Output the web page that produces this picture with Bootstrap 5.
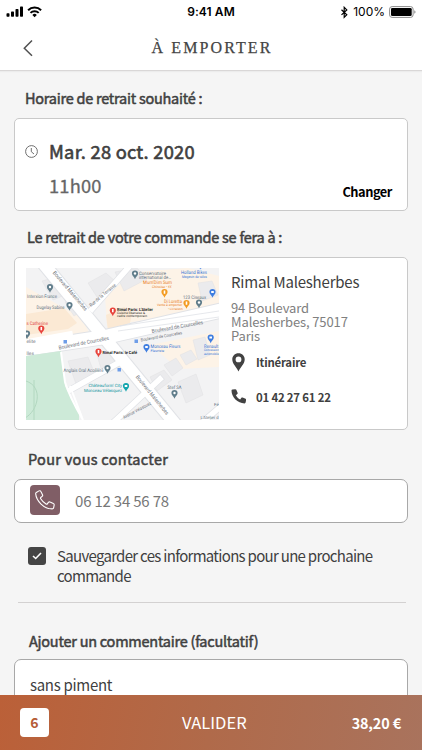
<!DOCTYPE html>
<html lang="fr">
<head>
<meta charset="utf-8">
<meta name="viewport" content="width=device-width, initial-scale=1">
<title>À emporter</title>
<link href="https://cdn.jsdelivr.net/npm/bootstrap@5.3.0/dist/css/bootstrap.min.css" rel="stylesheet">
<style>
body{height:750px;overflow:hidden;background:#f5f5f5;color:#404040;font-family:"Noto Sans CJK JP","Noto Sans CJK SC",sans-serif;font-size:15px;line-height:20px}
.app-screen{height:750px;overflow:hidden}
.app-head{height:71px;border-bottom:1px solid #d9d7d7;box-shadow:0 1px 1px #ececec;flex:none}
.status{height:24px;font-family:Inter,"Liberation Sans",sans-serif;font-size:12px;color:#000;padding:0 6px}
.status > *{flex:1}
.clock-text{font-weight:600;letter-spacing:.1px}
.title-bar{height:48px;padding:0 20px}
.title-bar h1{font-family:"Liberation Serif",serif;font-size:16px;letter-spacing:2.1px;margin:0 -2px 0 0;color:#444;-webkit-text-stroke:.25px #444}
.side{width:16px}
.app-main{height:624px;overflow:hidden;padding:0 14px;flex:none}
.panel{border:1px solid #c9c9c9;border-radius:5px;background:#fff}
.lbl{font-weight:400;-webkit-text-stroke:.5px #404040;font-size:14.5px;line-height:20px;margin:0;white-space:nowrap}
.l1{margin:17px 0 0 11px;letter-spacing:-.25px}
.p1{height:93px;margin-top:10px;padding:20px 15px 0 11px}
.clock-icon{margin:6px 0 0 -1px}
.when{margin-left:11px}
.l2{margin:16px 0 0 13px;letter-spacing:-.25px}
.p2{height:173px;margin-top:10px;padding:10px 11px}
.l3{margin:19px 0 0 14px;letter-spacing:.3px}
.p3{height:44px;margin-top:10px;padding:0 15px;border-color:#a8a8a8;border-radius:7px}
.day{-webkit-text-stroke:.6px #404040;font-size:18.3px;letter-spacing:.25px;line-height:24px;color:#404040}
.hour{font-size:18.3px;letter-spacing:.2px;line-height:24px;color:#666;margin-top:10px;-webkit-text-stroke:.3px #666}
.change{font-size:12.8px;font-weight:700;color:#000;letter-spacing:-.45px;line-height:18px;margin-bottom:9px}
.shop{font-size:15px;letter-spacing:-.2px;line-height:20px;margin-top:4px;white-space:nowrap}
.addr{font-size:13px;letter-spacing:-.12px;line-height:14.2px;color:#808080;margin-top:9px}
.act{font-size:11.4px;font-weight:700;line-height:18px;gap:10px;letter-spacing:-.2px}
.act-map{margin-top:9px}
.phone-tile{width:30px;height:30px;border-radius:4px;background:#805e66;margin-bottom:2px}
.tel{font-size:15px;color:#777;letter-spacing:-.2px;margin-left:15px}
.tick{width:18px;height:18px;border-radius:3px;background:#454545;flex:none}
.save{margin:24px 0 0 14px;gap:11px;letter-spacing:-.7px}
.save-text{margin-top:-1px}
.rule{height:1px;background:#d3d1d1;margin:16px 2px 0 4px}
.l4{margin:28px 0 0 15px;letter-spacing:-.24px}
.p4{height:90px;margin-top:8px;padding:15px;border-color:#a8a8a8;border-radius:7px;letter-spacing:-.3px}
.app-foot{height:55px;background:linear-gradient(100deg,#bb6038,#b06a4a 50%,#a9735d);color:#fff;padding:0 21px 0 20px;flex:none}
.count{width:29px;height:29px;border-radius:4px;background:#fff;color:#b65c36;font-weight:700;font-size:14px;padding-bottom:1px}
.go{font-size:16.5px;margin:0 0 2px 28px}
.sum{font-size:14.4px;font-weight:700;letter-spacing:-.15px}
</style>
<script src="https://cdn.jsdelivr.net/npm/bootstrap@5.3.0/dist/js/bootstrap.bundle.min.js"></script>
</head>
<body>
<div class="app-screen d-flex flex-column">
<header class="app-head bg-white">
  <div class="status d-flex align-items-center">
    <div class="d-flex align-items-center">
      <svg width="37" height="14" viewBox="0 0 37 14"><g fill="#000"><rect x=".5" y="8.2" width="3" height="3.6" rx=".7"/><rect x="5" y="6.5" width="3" height="5.3" rx=".7"/><rect x="9.5" y="4" width="3" height="7.8" rx=".7"/><rect x="14" y="1.5" width="3" height="10.3" rx=".7"/></g><g fill="none" stroke="#000" stroke-width="2"><path d="M22.1 5.2a9.2 9.2 0 0 1 13 0M24.5 7.9a5.8 5.8 0 0 1 8.2 0"/></g><path d="M28.6 12.2l-2.2-2.3a3.2 3.2 0 0 1 4.4 0z"/></svg>
    </div>
    <div class="clock-text text-center">9:41 AM</div>
    <div class="d-flex align-items-center justify-content-end">
      <svg class="me-1" width="9" height="13" viewBox="0 0 9 13" fill="none" stroke="#000" stroke-width="1.2"><path d="M1.5 3.7l5.3 5-2.6 2.6V1.3l2.6 2.6-5.3 5"/></svg>
      <span>100%</span>
      <svg class="ms-1" width="27" height="12" viewBox="0 0 27 12"><rect x=".6" y=".6" width="23.5" height="10.8" rx="2.5" fill="none" stroke="#8b8b8b"/><rect x="2" y="2" width="20.7" height="8" rx="1.3"/><path d="M25.2 4.2q1.4.5 1.4 1.8t-1.4 1.8z" fill="#999"/></svg>
    </div>
  </div>
  <div class="title-bar d-flex align-items-center justify-content-between">
    <svg class="side" height="18" viewBox="0 0 16 18" fill="none" stroke="#505050" stroke-width="1.5"><path d="M12 1.5L4.3 9.2l7.7 7.6"/></svg>
    <h1>À EMPORTER</h1>
    <span class="side"></span>
  </div>
</header>
<main class="app-main">
  <h2 class="lbl l1">Horaire de retrait souhaité :</h2>
  <section class="panel p1 d-flex">
    <svg class="clock-icon flex-shrink-0" width="13" height="13" viewBox="0 0 13 13" fill="none" stroke="#606060" stroke-width=".9"><circle cx="6.500" cy="6.500" r="5.900"/><path d="M6.300 3v3.700L9 9"/></svg>
    <div class="when flex-grow-1">
      <div class="day">Mar. 28 oct. 2020</div>
      <div class="hour">11h00</div>
    </div>
    <div class="change align-self-end">Changer</div>
  </section>
  <h2 class="lbl l2">Le retrait de votre commande se fera à :</h2>
  <section class="panel p2 d-flex">
    <svg class="flex-shrink-0" width="193" height="152" viewBox="26 268 193 152" font-family="Roboto,sans-serif" font-size="4.9" text-rendering="geometricPrecision">
      <defs><path id="pin" d="M0 4.2C-.8 2-3.1.9-3.1-1.4a3.1 3.1 0 0 1 6.2 0C3.1.9.8 2 0 4.2z"/></defs>
      <rect x="26" y="268" width="193" height="152" fill="#f3f3f4"/>
      <g fill="#fdf3e7"><path d="M26 287l55 30 9 17-64 10zM105 296l31-24 52-4 31 8v32l-112 18zM150 345l69-14v36l-40 2z"/></g>
      <g fill="#ebebed" stroke="#e0e0e3" stroke-width=".5"><path d="M42 281l18-5 10 17-17 7zM65 302l12-7 9 13-12 8zM88 283l18-10 10 9-19 15zM115 272l22-4 10 11-23 12zM68 361l20-4 8 20-20 7zM97 355l13-2 9 14-16 8zM164 365l12-7 7 10-11 8zM180 355l11-5 6 9-11 6zM150 377l14-7 8 10-15 11zM178 382l18-8 7 21-17 8zM198 283l14-2 6 14-16 6zM193 340l12-3 5 18-12 5z"/></g>
      <g fill="#fbe9d4"><path d="M26 314l38-6 13 15-9 6-42 6zM106 315l18-8 8 6-2 10-22 8z"/></g>
      <g fill="none" stroke="#e0e2e6" stroke-linecap="square"><path d="M47 268L172 420" stroke-width="14"/><path d="M26 349L105 337 219 311" stroke-width="16"/><path d="M92 309L128 268M70 390l50-28M116 420l44-41M205 420l14-12" stroke-width="7"/></g>
      <g fill="none" stroke="#fff" stroke-linecap="square"><path d="M47 268L172 420" stroke-width="12"/><path d="M26 349L105 337 219 311" stroke-width="14"/><path d="M92 309L128 268M70 390l50-28M116 420l44-41M205 420l14-12M26 342l44-8" stroke-width="5.5"/></g>
      <path d="M120 326l99-15M118 331l101-14" fill="none" stroke="#dfe2e7" stroke-width=".8"/>
      <path d="M26 356l35-5 4 35 14 28v6H26z" fill="#cdead8"/>
      <path d="M26 381c18 6 12 30-1 37M34 380v40" fill="none" stroke="#b2d8c0" stroke-width="1"/>
      <path d="M61 352l4 30q4 14 18 38M70 386l13 34" fill="none" stroke="#fff" stroke-width="2"/>
      <g fill="#6c7178" font-size="5.400">
        <text transform="translate(52.500 273) rotate(49.500)" textLength="50" lengthAdjust="spacingAndGlyphs">Boulevard Malesherbes</text>
        <text transform="translate(91 307) rotate(-40)" textLength="33" font-size="4.800" lengthAdjust="spacingAndGlyphs">Rue de la Terrasse</text>
        <text transform="translate(59 349.500) rotate(-11)" textLength="51" lengthAdjust="spacingAndGlyphs">Boulevard de Courcelles</text>
        <text transform="translate(152 333) rotate(-10)" textLength="52" lengthAdjust="spacingAndGlyphs">Boulevard de Courcelles</text>
        <text transform="translate(141 341.500) rotate(-10)" textLength="42" font-size="4.400" lengthAdjust="spacingAndGlyphs">Boulevard de Courcelles</text>
        <text transform="translate(135.500 377) rotate(51)" textLength="49" lengthAdjust="spacingAndGlyphs">Boulevard Malesherbes</text>
        <text transform="translate(124 419) rotate(-28)" textLength="31" font-size="4.600" lengthAdjust="spacingAndGlyphs">Avenue Velasquez</text>
        <text x="26.500" y="343" font-size="4.800">elite</text><text x="26.500" y="355" font-size="4.800">lles</text>
      </g>
      <g fill="#62727f">
        <text x="27" y="297.500" textLength="30" lengthAdjust="spacingAndGlyphs">Interxion France</text><text x="36.500" y="308.500" textLength="28" lengthAdjust="spacingAndGlyphs">Dugelay Sabine</text>
        <text x="139" y="274.500" textLength="27" lengthAdjust="spacingAndGlyphs" font-size="4.600">Conservatoire</text><text x="139" y="279.300" textLength="32" lengthAdjust="spacingAndGlyphs" font-size="4.600">international de…</text>
        <text x="183" y="298.500" textLength="23" lengthAdjust="spacingAndGlyphs">123 Ciseaux</text><text x="63.500" y="371.500" textLength="40" lengthAdjust="spacingAndGlyphs">Anglais Oral Accéléré</text><text x="167.500" y="388.500" textLength="14" lengthAdjust="spacingAndGlyphs">Stef SA</text>
        <text x="214" y="405.500" font-size="4.400">Fé</text><text x="200.500" y="419" textLength="18" lengthAdjust="spacingAndGlyphs" font-size="4.300">L'Atelier d</text>
      </g>
      <text x="26.500" y="324.500" fill="#e03f3f" textLength="21.500" lengthAdjust="spacingAndGlyphs">s Catherine</text>
      <g fill="#e97c1c"><text x="143" y="284" textLength="29" lengthAdjust="spacingAndGlyphs">Mum'Dim Sum</text><text x="152" y="288" font-size="3.400">Chinoise • €€</text><text x="164" y="302.500" textLength="18" lengthAdjust="spacingAndGlyphs">Di Loretta</text><text x="157" y="306.300" font-size="3.300" textLength="25" lengthAdjust="spacingAndGlyphs">Vente à emporter</text><text x="168" y="310" font-size="3.200">• Livraison</text></g>
      <g fill="#3574d6"><text x="181" y="274" textLength="26" lengthAdjust="spacingAndGlyphs">Holland Bikes</text><text x="182" y="278" font-size="3.600" textLength="25" lengthAdjust="spacingAndGlyphs">Magasin de vélos</text><text x="150.500" y="348" textLength="30" lengthAdjust="spacingAndGlyphs">Monceau Fleurs</text><text x="150.500" y="352" font-size="3.600">Fleuriste</text><text x="204" y="347.500" textLength="14.500" lengthAdjust="spacingAndGlyphs">Renault</text><text x="204" y="351.300" font-size="3.300" textLength="14.800" lengthAdjust="spacingAndGlyphs">Concession</text><text x="204" y="355" font-size="3.300" textLength="14.800" lengthAdjust="spacingAndGlyphs">automobile</text></g>
      <g fill="#222" font-weight="700"><text x="117" y="310.800" textLength="36" font-size="4.200" lengthAdjust="spacingAndGlyphs">Rimal Paris: L'Atelier</text><text x="102.500" y="354.300" textLength="34.500" font-size="4.200" lengthAdjust="spacingAndGlyphs">Rimal Paris: le Café</text></g>
      <g fill="#333" font-size="3.300"><text x="117" y="314" textLength="28" lengthAdjust="spacingAndGlyphs">Cuisine libanaise &amp;</text><text x="117" y="317.300" textLength="30" lengthAdjust="spacingAndGlyphs">cadre contemporain</text></g>
      <g fill="#0c929c" font-size="4.400"><text x="88.500" y="387" textLength="33.500" lengthAdjust="spacingAndGlyphs">Châteauform' City</text><text x="84" y="391.700" textLength="38" lengthAdjust="spacingAndGlyphs">Monceau Vélasquez</text></g>
      <g fill="#607d8b"><use href="#pin" x="50" y="288.500"/><use href="#pin" x="69.500" y="306.500"/><use href="#pin" x="27" y="335"/><use href="#pin" x="135" y="275"/><use href="#pin" x="199" y="304"/><use href="#pin" x="107.500" y="369.500"/><use href="#pin" x="174.500" y="394.500"/></g>
      <g fill="#e8443d"><use href="#pin" x="41.300" y="330"/><use href="#pin" x="112.800" y="312"/><use href="#pin" x="98.500" y="353"/></g>
      <g fill="#f39b22"><use href="#pin" x="164.500" y="293.500"/><use href="#pin" x="186.500" y="304.500"/></g>
      <g fill="#3f7ee0"><use href="#pin" x="212.500" y="293.500"/><use href="#pin" x="146.500" y="348.500"/><use href="#pin" x="210.700" y="339"/></g>
      <use href="#pin" x="126" y="387.500" fill="#12a5ad"/>
      <g fill="#fff"><circle cx="50" cy="287" r="1.200"/><circle cx="69.500" cy="305" r="1.200"/><circle cx="27" cy="333.500" r="1.200"/><circle cx="135" cy="273.500" r="1.200"/><circle cx="199" cy="302.500" r="1.200"/><circle cx="107.500" cy="368" r="1.200"/><circle cx="174.500" cy="393" r="1.200"/><path d="M40.500 327h1.600v3.300h-1.600zM112 309h1.600v3.300H112zM97.700 350h1.600v3.300h-1.600zM163.700 290.500h1.600v3.300h-1.600zM185.700 301.500h1.600v3.300h-1.600zM211.200 291h2.600v2h-2.600zM145.200 346h2.600v2h-2.600zM209.400 336.500h2.600v2h-2.600zM124.700 385h2.600v2h-2.600z"/></g>
      <g fill="#6e9de8"><rect x="63.500" y="340" width="3.500" height="3.500"/><rect x="134.500" y="339.500" width="3.500" height="3.500"/><rect x="117.500" y="368" width="3.500" height="3.500"/><circle cx="200.500" cy="268.500" r=".8"/></g>
    </svg>
    <div class="ms-2 ps-1 d-flex flex-column">
      <div class="shop">Rimal Malesherbes</div>
      <div class="addr">94 Boulevard<br>Malesherbes, 75017<br>Paris</div>
      <div class="act act-map d-flex align-items-center"><svg width="15" height="19" viewBox="0 0 15 19"><path fill="#424242" fill-rule="evenodd" d="M7.500 .3C3.900.3 1.300 3 1.300 6.400c0 4.100 4 7.400 6.200 12 2.200-4.600 6.200-7.900 6.200-12C13.700 3 11.100.3 7.500.3zm0 3.200a2.900 2.900 0 1 1 0 5.800 2.900 2.900 0 0 1 0-5.800z"/></svg>Itinéraire</div>
      <div class="act d-flex align-items-center mt-3"><svg width="15" height="15" viewBox="0 0 15 15"><path fill="#424242" d="M1.500.6L4.200.2c.5-.1.900.2 1.100.6l1.300 3c.2.400 0 .9-.3 1.200L4.900 6.200c1 2 2.300 3.300 4.300 4.200l1.200-1.600c.3-.4.8-.5 1.200-.3l3 1.300c.4.200.6.600.5 1.100l-.5 2.700c-.1.500-.5.800-1 .8C6.600 14.400.5 8.300.5 1.600c0-.5.400-.9 1-1z"/></svg>01 42 27 61 22</div>
    </div>
  </section>
  <h2 class="lbl l3">Pour vous contacter</h2>
  <section class="panel p3 d-flex align-items-center">
    <span class="phone-tile d-flex align-items-center justify-content-center"><svg width="20" height="20" viewBox="0 0 20 20" fill="none" stroke="#fff" stroke-width="1.100" stroke-linejoin="round"><path d="M1.300 2.500L4 .9c.7-.4 1.600-.1 1.900.6l1.600 3.200c.3.600.1 1.300-.4 1.700L6 7.300c-.5.400-.6 1-.3 1.500 1.300 2.100 3 3.900 5.300 5.200.5.300 1.200.1 1.500-.4l.9-1.200c.4-.5 1.100-.7 1.700-.4l3.200 1.500c.7.300 1 1.100.8 1.800l-.5 2.500c-.2.700-.8 1.100-1.500 1.100C8.900 18.800 1.300 11 .7 3.900c-.1-.6.1-1.100.6-1.400z"/></svg></span>
    <span class="tel">06 12 34 56 78</span>
  </section>
  <div class="save d-flex">
    <span class="tick d-flex align-items-center justify-content-center"><svg width="10" height="8" viewBox="0 0 10 8" fill="none" stroke="#fff" stroke-width="1.600"><path d="M1 4l2.700 2.500L9 1"/></svg></span>
    <div class="save-text">Sauvegarder ces informations pour une prochaine<br>commande</div>
  </div>
  <div class="rule"></div>
  <h2 class="lbl l4">Ajouter un commentaire (facultatif)</h2>
  <section class="panel p4">sans piment</section>
</main>
<footer class="app-foot d-flex align-items-center justify-content-between">
  <span class="count d-flex align-items-center justify-content-center">6</span>
  <span class="go">VALIDER</span>
  <span class="sum">38,20 €</span>
</footer>
</div>
</body>
</html>
